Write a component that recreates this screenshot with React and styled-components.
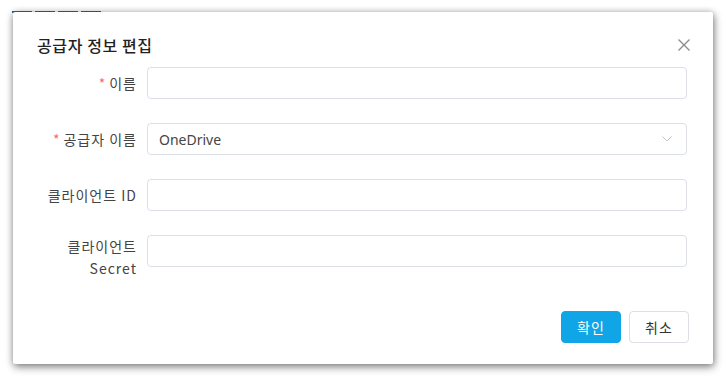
import styled, { createGlobalStyle } from "styled-components";

const GlobalStyle = createGlobalStyle`
  html, body {
    margin: 0;
    padding: 0;
    background: #ffffff;
  }
  body {
    font-family: "Noto Sans", "Noto Sans CJK KR", sans-serif;
    color: #333;
  }
`;

const fields = [
  { label: "이름", required: true, value: "" },
  { label: "공급자 이름", required: true, value: "OneDrive", select: true },
  { label: "클라이언트 ID", value: "" },
  { label: "클라이언트 Secret", value: "" },
];

const App = () => {
  return (
    <Page>
      <GlobalStyle />
      <BehindTabs>
        <Tab />
        <Tab />
        <Tab />
        <Tab />
      </BehindTabs>
      <Dialog>
        <Header>
          <Title>공급자 정보 편집</Title>
          <CloseButton aria-label="닫기">
            <svg width="12" height="12" viewBox="0 0 12 12">
              <path d="M0.5 0.5L11.5 11.5M11.5 0.5L0.5 11.5" stroke="#8a8a8a" strokeWidth="1.3" />
            </svg>
          </CloseButton>
        </Header>
        <Form>
          {fields.map((field) => (
            <Row key={field.label}>
              <Label>
                <span>
                  {field.required && <Star>*</Star>}
                  {field.label}
                </span>
              </Label>
              <Input>
                <span>{field.value}</span>
                {field.select && (
                  <svg width="10" height="6" viewBox="0 0 10 6">
                    <path d="M0.5 0.5L5 5L9.5 0.5" stroke="#c0c4cc" strokeWidth="1" fill="none" />
                  </svg>
                )}
              </Input>
            </Row>
          ))}
        </Form>
        <Footer>
          <Button primary>확인</Button>
          <Button>취소</Button>
        </Footer>
      </Dialog>
    </Page>
  );
};

export default App;

const Page = styled.div`
  position: relative;
  width: 726px;
  height: 376px;
  overflow: hidden;
`;

const BehindTabs = styled.div`
  display: flex;
  gap: 3px;
  padding: 11px 0 0 12px;
`;

const Tab = styled.div`
  width: 20px;
  height: 2px;
  background: #2c6f80;
`;

const Dialog = styled.div`
  position: absolute;
  top: 12px;
  left: 13px;
  width: 700px;
  height: 352px;
  background: #fff;
  border-radius: 2px;
  box-shadow: 1px 3px 8px rgba(0, 0, 0, 0.45), 0 0 6px rgba(0, 0, 0, 0.2);
  display: flex;
  flex-direction: column;
  box-sizing: border-box;
  padding: 22px 26px 0 24px;
`;

const Header = styled.div`
  display: flex;
  align-items: center;
  justify-content: space-between;
  height: 22px;
  margin-bottom: 11px;
`;

const Title = styled.div`
  font-family: "Noto Sans CJK KR", sans-serif;
  font-size: 16px;
  font-weight: 500;
  color: #222;
  letter-spacing: 0.6px;
`;

const CloseButton = styled.button`
  border: none;
  background: none;
  padding: 0;
  margin-right: -3px;
  display: flex;
  cursor: pointer;
`;

const Form = styled.div`
  display: flex;
  flex-direction: column;
  gap: 24px;
`;

const Row = styled.div`
  display: flex;
  align-items: flex-start;
  gap: 10px;
`;

const Label = styled.div`
  width: 100px;
  min-height: 32px;
  display: flex;
  align-items: center;
  justify-content: flex-end;
  text-align: right;
  font-family: "Noto Sans CJK KR", sans-serif;
  font-size: 14px;
  line-height: 22px;
  letter-spacing: 1px;
  color: #444;
`;

const Star = styled.span`
  color: #f56c6c;
  margin-right: 3px;
`;

const Input = styled.div`
  flex: 1;
  height: 32px;
  box-sizing: border-box;
  border: 1px solid #dcdfe6;
  border-radius: 4px;
  display: flex;
  align-items: center;
  justify-content: space-between;
  padding: 0 14px 0 11px;
  font-size: 14px;
  color: #444;
`;

const Footer = styled.div`
  display: flex;
  justify-content: flex-end;
  gap: 8px;
  margin-top: 32px;
  margin-right: -2px;
`;

const Button = styled.button`
  width: 60px;
  height: 32px;
  border-radius: 4px;
  font-family: "Noto Sans CJK KR", sans-serif;
  font-size: 14px;
  letter-spacing: 1px;
  cursor: pointer;
  border: 1px solid ${(p) => (p.primary ? "#10a5e6" : "#dcdfe6")};
  background: ${(p) => (p.primary ? "#10a5e6" : "#fff")};
  color: ${(p) => (p.primary ? "#fff" : "#333")};
`;
